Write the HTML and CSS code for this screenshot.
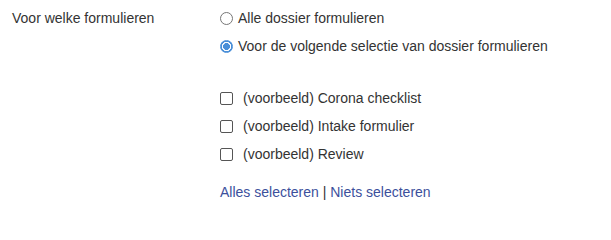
FILE: index.html
```html
<!DOCTYPE html>
<html lang="nl">
<head>
<meta charset="utf-8">
<link rel="stylesheet" href="styles.css">
</head>
<body>
<div class="field">
  <div class="field-label">Voor welke formulieren</div>
  <div class="field-body">
    <label class="opt radio-opt"><input type="radio" name="scope" class="radio"><span>Alle dossier formulieren</span></label>
    <label class="opt radio-opt"><input type="radio" name="scope" class="radio" checked><span>Voor de volgende selectie van dossier formulieren</span></label>
    <div class="checks">
      <label class="opt check-opt"><input type="checkbox" class="check"><span>(voorbeeld) Corona checklist</span></label>
      <label class="opt check-opt"><input type="checkbox" class="check"><span>(voorbeeld) Intake formulier</span></label>
      <label class="opt check-opt"><input type="checkbox" class="check"><span>(voorbeeld) Review</span></label>
    </div>
    <div class="links"><a href="#" class="link">Alles selecteren</a> | <a href="#" class="link">Niets selecteren</a></div>
  </div>
</div>
</body>
</html>
```

FILE: styles.css
```css
html, body {
  margin: 0;
  padding: 0;
  background: #fff;
}
body {
  font-family: "Liberation Sans", Arial, sans-serif;
  font-size: 14px;
  color: #333;
}
.field {
  display: flex;
  padding: 8px 0 0 12px;
}
.field-label {
  width: 208px;
  line-height: 20px;
}
.field-body {
  display: flex;
  flex-direction: column;
}
.opt {
  display: flex;
  align-items: center;
  height: 20px;
}
.radio-opt {
  margin-bottom: 8px;
}
.radio {
  appearance: none;
  -webkit-appearance: none;
  width: 13px;
  height: 13px;
  margin: 0 5px 0 0;
  border: 1px solid #767676;
  border-radius: 50%;
  box-sizing: border-box;
  background: #fff;
}
.radio:checked {
  border-color: #4a8fd8;
  background: radial-gradient(circle, #4a8fd8 0 3.2px, #fff 3.7px 4.4px, #4a8fd8 5px);
}
.checks {
  margin-top: 24px;
  display: flex;
  flex-direction: column;
  gap: 8px;
}
.check {
  appearance: none;
  -webkit-appearance: none;
  width: 13px;
  height: 13px;
  margin: 0 10px 0 0;
  border: 1px solid #555;
  border-radius: 2px;
  box-sizing: border-box;
  background: #fff;
}
.links {
  margin-top: 18px;
  line-height: 20px;
  color: #333;
}
.link {
  color: #3c509c;
  text-decoration: none;
}
```
